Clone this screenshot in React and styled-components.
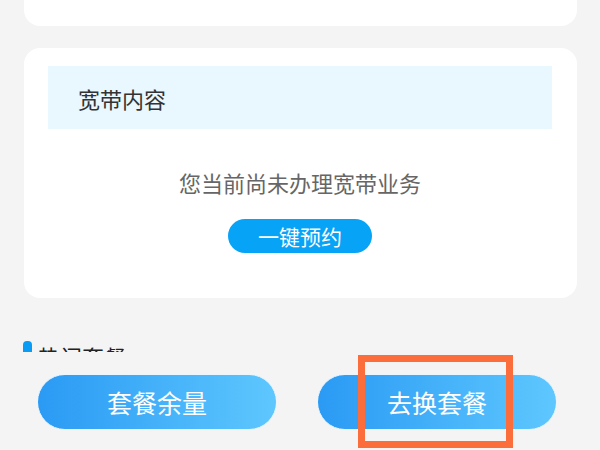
import React from 'react'
import styled, { createGlobalStyle } from 'styled-components'

const GlobalStyle = createGlobalStyle`
  html, body {
    margin: 0;
    padding: 0;
    background: #f4f4f4;
    font-family: "Noto Sans CJK SC", "Noto Sans", sans-serif;
  }
  #root {
    height: 450px;
    overflow: hidden;
  }
`

const Page = styled.div`
  display: flex;
  flex-direction: column;
  padding: 0 23px 0 24px;
  height: 450px;
  box-sizing: border-box;
`

const TopCard = styled.div`
  height: 26px;
  background: #fff;
  border-radius: 0 0 16px 16px;
`

const Card = styled.div`
  margin-top: 22px;
  background: #fff;
  border-radius: 16px;
  padding: 18px 25px 45px 24px;
  display: flex;
  flex-direction: column;
  align-items: center;
`

const CardHeader = styled.div`
  align-self: stretch;
  height: 63px;
  background: #e9f7fe;
  display: flex;
  align-items: center;
  padding-left: 30px;
  font-size: 22px;
  color: #333;
`

const Message = styled.div`
  margin-top: 38px;
  font-size: 22px;
  line-height: 30px;
  color: #666;
`

const SmallButton = styled.button`
  margin-top: 22px;
  width: 144px;
  height: 34px;
  border: none;
  border-radius: 17px;
  background: #07a3f7;
  color: #fff;
  font-family: inherit;
  font-size: 21px;
  padding: 0;
  line-height: 34px;
`

const SectionTitle = styled.div`
  margin-top: 43px;
  margin-left: -1px;
  display: flex;
  align-items: flex-start;
  gap: 6px;
  font-size: 22px;
  line-height: 24px;
  color: #222;
`

const TitleText = styled.span`
  margin-top: 3px;
`

const Marker = styled.span`
  width: 9px;
  height: 18px;
  border-radius: 4px 4px 2px 2px;
  background: #0a9cf4;
`

const BottomBar = styled.div`
  position: fixed;
  left: 0;
  right: 0;
  bottom: 0;
  height: 98px;
  box-sizing: border-box;
  padding: 22px 0 0 37px;
  background: #f4f4f4;
  display: flex;
  gap: 40px;
`

const ActionButton = styled.button`
  position: relative;
  width: 240px;
  height: 56px;
  border: 1px solid #eaf6fe;
  border-radius: 28px;
  background: linear-gradient(90deg, #2a9af4 0%, #5ec7fe 100%);
  color: #fff;
  font-family: inherit;
  font-size: 25px;
  padding: 0;
`

const Highlight = styled.span`
  position: absolute;
  left: 40px;
  top: -20px;
  width: 155px;
  height: 93px;
  box-sizing: border-box;
  border: 7px solid #fb6d3b;
  pointer-events: none;
`

export default function App() {
  return (
    <>
      <GlobalStyle />
      <Page>
        <TopCard />
        <Card>
          <CardHeader>宽带内容</CardHeader>
          <Message>您当前尚未办理宽带业务</Message>
          <SmallButton>一键预约</SmallButton>
        </Card>
        <SectionTitle>
          <Marker />
          <TitleText>热门套餐</TitleText>
        </SectionTitle>
      </Page>
      <BottomBar>
        <ActionButton>套餐余量</ActionButton>
        <ActionButton>
          去换套餐
          <Highlight />
        </ActionButton>
      </BottomBar>
    </>
  )
}
